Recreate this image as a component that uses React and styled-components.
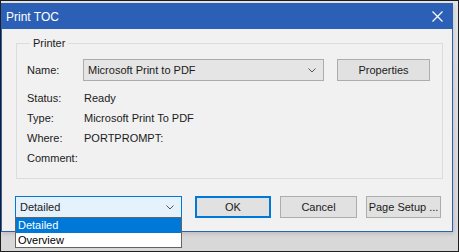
import React from "react";
import styled, { createGlobalStyle } from "styled-components";

const GlobalStyle = createGlobalStyle`
    html, body {
        margin: 0;
        padding: 0;
        background: #d9d9d9;
    }
    * {
        box-sizing: border-box;
    }
`;

const Frame = styled.div`
    width: 459px;
    height: 252px;
    border: 1px solid #1e1e1e;
    background: linear-gradient(#e4e4e4, #d8d8d8);
    font-family: "Liberation Sans", Arial, sans-serif;
    font-size: 11px;
    color: #1b1b1b;
    overflow: hidden;
    padding-top: 2px;
`;

const Window = styled.div`
    width: 452px;
    height: 229px;
    border: 1px solid #2d5fb3;
    background: #f1f1f1;
    display: flex;
    flex-direction: column;
    position: relative;
    box-shadow: 1px 2px 4px rgba(0, 0, 0, 0.12);
`;

const TitleBar = styled.div`
    height: 25px;
    flex-shrink: 0;
    background: #2c5fb6;
    color: #fff;
    display: flex;
    align-items: center;
    justify-content: space-between;
    padding: 0 9px 0 4px;
    font-size: 12px;
`;

const CloseIcon = styled.svg`
    width: 11px;
    height: 11px;
`;

const Body = styled.div`
    padding: 7px 0 0 14px;
    display: flex;
    flex-direction: column;
`;

const GroupBox = styled.fieldset`
    margin: 0;
    width: 427px;
    height: 143px;
    border: 1px solid #dcdcdc;
    padding: 9px 10px 0 10px;
    display: flex;
    flex-direction: column;
`;

const Legend = styled.legend`
    padding: 0 3px;
    margin-left: 3px;
    line-height: 14px;
    font-size: 11px;
`;

const NameRow = styled.div`
    display: flex;
    align-items: center;
    height: 22px;
    margin-bottom: 7px;
`;

const Label = styled.span`
    width: ${(p) => p.$width || 57}px;
    flex-shrink: 0;
`;

const Combo = styled.div`
    width: ${(p) => p.$width}px;
    height: 22px;
    display: flex;
    align-items: center;
    justify-content: space-between;
    padding: 0 7px 0 4px;
    background: ${(p) => (p.$focused ? "#e5f1fb" : "#e5e5e5")};
    border: 1px solid ${(p) => (p.$focused ? "#0078d7" : "#acacac")};
    color: #1b1b1b;
`;

const Chevron = styled.svg`
    width: 8px;
    height: 5px;
`;

const Button = styled.div`
    width: ${(p) => p.$width || 76}px;
    height: 22px;
    margin-left: ${(p) => p.$gap || 9}px;
    display: flex;
    align-items: center;
    justify-content: center;
    background: #e1e1e1;
    border: ${(p) => (p.$default ? "2px solid #0078d7" : "1px solid #adadad")};
    color: #1b1b1b;
`;

const InfoRow = styled.div`
    display: flex;
    align-items: center;
    height: 20px;
`;

const BottomRow = styled.div`
    display: flex;
    align-items: center;
    margin-top: 17px;
    margin-left: -1px;
`;

const ComboWrap = styled.div`
    position: relative;
`;

const DropList = styled.div`
    position: absolute;
    left: 0;
    top: 21px;
    width: 167px;
    border: 1px solid #646464;
    background: #fff;
    z-index: 2;
`;

const DropItem = styled.div`
    height: ${(p) => (p.$selected ? 15 : 14)}px;
    line-height: ${(p) => (p.$selected ? 15 : 14)}px;
    padding-left: 2px;
    background: ${(p) => (p.$selected ? "#0078d7" : "#fff")};
    color: ${(p) => (p.$selected ? "#fff" : "#000")};
`;

const ChevronIcon = () => (
    <Chevron viewBox="0 0 8 5">
        <path d="M0.5 0.5 L4 4 L7.5 0.5" fill="none" stroke="#555" strokeWidth="1" />
    </Chevron>
);

const info = [
    ["Status:", "Ready"],
    ["Type:", "Microsoft Print To PDF"],
    ["Where:", "PORTPROMPT:"],
    ["Comment:", ""],
];

const App = () => {
    return (
        <Frame>
            <GlobalStyle />
            <Window>
                <TitleBar>
                    <span>Print TOC</span>
                    <CloseIcon viewBox="0 0 11 11">
                        <path d="M0.5 0.5 L10.5 10.5 M10.5 0.5 L0.5 10.5" stroke="#fff" strokeWidth="1.2" />
                    </CloseIcon>
                </TitleBar>
                <Body>
                    <GroupBox>
                        <Legend>Printer</Legend>
                        <NameRow>
                            <Label $width={56}>Name:</Label>
                            <Combo $width={241}>
                                <span>Microsoft Print to PDF</span>
                                <ChevronIcon />
                            </Combo>
                            <Button $width={93} $gap={13}>Properties</Button>
                        </NameRow>
                        {info.map(([label, value]) => (
                            <InfoRow key={label}>
                                <Label>{label}</Label>
                                <span>{value}</span>
                            </InfoRow>
                        ))}
                    </GroupBox>
                    <BottomRow>
                        <ComboWrap>
                            <Combo $width={167} $focused>
                                <span>Detailed</span>
                                <ChevronIcon />
                            </Combo>
                            <DropList>
                                <DropItem $selected>Detailed</DropItem>
                                <DropItem>Overview</DropItem>
                            </DropList>
                        </ComboWrap>
                        <Button $default $gap={13}>OK</Button>
                        <Button $width={77}>Cancel</Button>
                        <Button $width={75}>Page Setup ...</Button>
                    </BottomRow>
                </Body>
            </Window>
        </Frame>
    );
};

export default App;
